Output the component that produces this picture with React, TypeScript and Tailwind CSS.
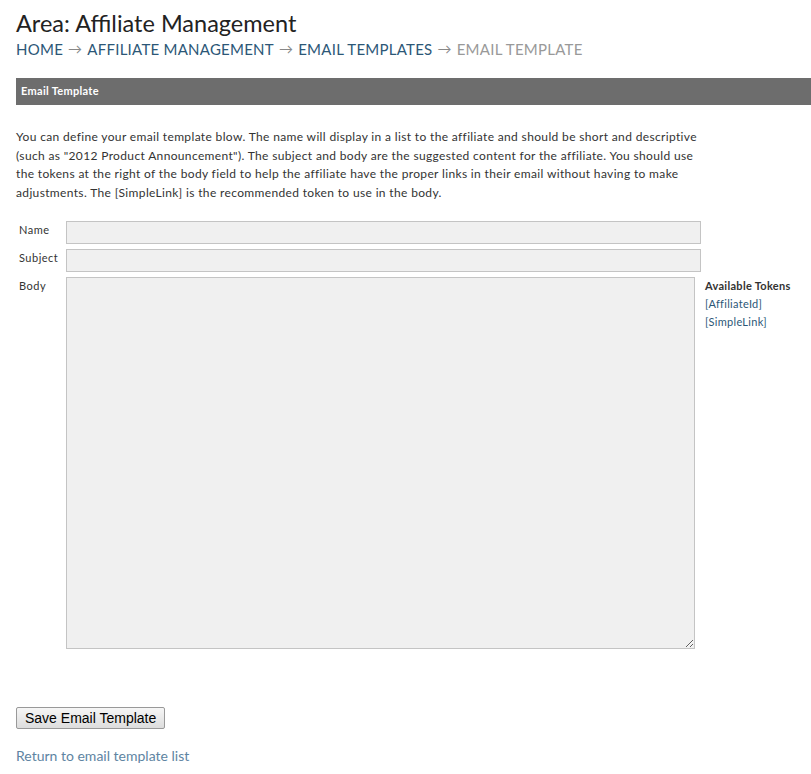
import React from "react";

export default function App() {
  return (
    <div className="w-[811px] min-h-[774px] bg-white pl-4 pt-[7px] font-['Lato',sans-serif] text-[#333]">
      <h1 className="text-[23.5px] leading-[32px] text-[#222] font-['Lato',sans-serif] font-normal">Area: Affiliate Management</h1>
      <div className="flex items-center text-[15px] leading-[20px] uppercase tracking-[0.25px]">
        <a className="text-[#2c5777]">Home</a>
        <span className="mx-[5px] text-[#888] text-[14px]">→</span>
        <a className="text-[#2c5777]">Affiliate Management</a>
        <span className="mx-[5px] text-[#888] text-[14px]">→</span>
        <a className="text-[#2c5777]">Email Templates</a>
        <span className="mx-[5px] text-[#888] text-[14px]">→</span>
        <span className="text-[#999]">Email Template</span>
      </div>
      <div className="mt-[19px] h-[27px] bg-[#6d6d6d] flex items-center pl-[5px]">
        <span className="text-white font-bold text-[11px] tracking-[0.3px]">Email Template</span>
      </div>
      <p className="mt-[23px] w-[740px] text-[12px] leading-[18.7px] tracking-[0.35px] text-[#333]">
        You can define your email template blow. The name will display in a list to the affiliate and should be short and descriptive
        <br />
        (such as "2012 Product Announcement"). The subject and body are the suggested content for the affiliate. You should use
        <br />
        the tokens at the right of the body field to help the affiliate have the proper links in their email without having to make
        <br />
        adjustments. The [SimpleLink] is the recommended token to use in the body.
      </p>
      <div className="mt-[18px] flex flex-col gap-[5px]">
        <div className="flex items-start">
          <label className="w-[50px] pl-[3px] pt-[1px] text-[11px] tracking-[0.5px] text-[#333]">Name</label>
          <input className="w-[635px] h-[23px] bg-[#f0f0f0] border border-[#c4c4c4] outline-none" />
        </div>
        <div className="flex items-start">
          <label className="w-[50px] pl-[3px] pt-[1px] text-[11px] tracking-[0.5px] text-[#333]">Subject</label>
          <input className="w-[635px] h-[23px] bg-[#f0f0f0] border border-[#c4c4c4] outline-none" />
        </div>
        <div className="flex items-start">
          <label className="w-[50px] pl-[3px] pt-[1px] text-[11px] tracking-[0.5px] text-[#333]">Body</label>
          <textarea className="w-[629px] h-[372px] bg-[#f0f0f0] border border-[#c4c4c4] outline-none" />
          <div className="ml-[10px] flex flex-col text-[11px] leading-[18px] tracking-[0.3px]">
            <span className="font-bold text-[#333]">Available Tokens</span>
            <a className="text-[#2c5777]">[AffiliateId]</a>
            <a className="text-[#2c5777]">[SimpleLink]</a>
          </div>
        </div>
      </div>
      <div className="mt-[56px]">
        <button className="h-[22px] px-[8px] border border-[#999] rounded-[2px] bg-gradient-to-b from-[#f6f6f6] to-[#dddddd] text-[14px] text-black font-['Liberation_Sans',Arial,sans-serif] leading-none">
          Save Email Template
        </button>
      </div>
      <div className="mt-[14px]">
        <a className="text-[14px] text-[#5e84a2]">Return to email template list</a>
      </div>
    </div>
  );
}
